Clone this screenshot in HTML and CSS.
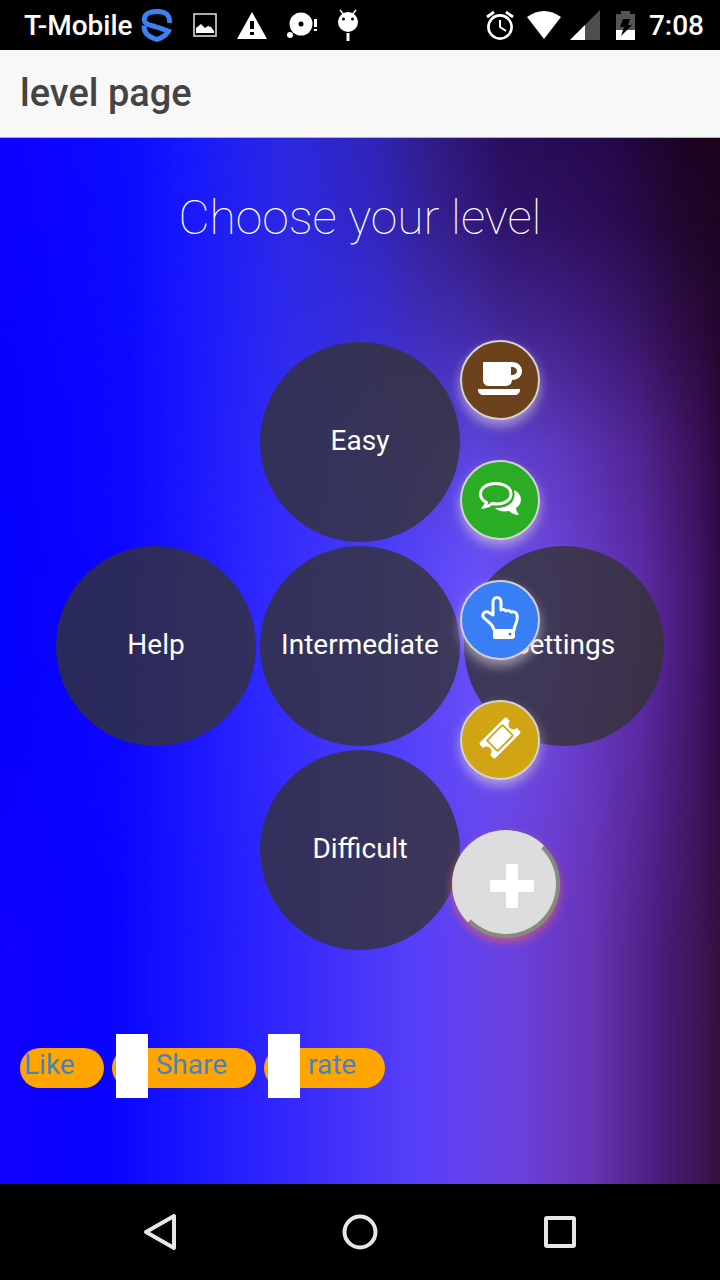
FILE: index.html
```html
<!DOCTYPE html>
<html lang="en">
<head>
<meta charset="utf-8">
<meta name="viewport" content="width=device-width, initial-scale=1">
<title>level page</title>
<link rel="stylesheet" href="styles.css">
</head>
<body>
<div class="status">
  <span class="carrier">T-Mobile</span>
  <div class="notes">
    <svg width="32" height="34" viewBox="0 0 32 34" fill="none" stroke="#3b82f0" stroke-width="5"><path d="M28.500 15C29 7 25 3.500 16 3.500S2.500 7 3.500 13c1 4 6 4 12 6s10 3 12 5"/><path d="M3 17.500C3 25 6 28 16 31.500 23 29 27 26 28.500 21"/></svg>
    <svg width="24" height="24" viewBox="0 0 24 24"><rect x="1" y="1" width="22" height="22" fill="none" stroke="#d8d8d8" stroke-width="1.600"/><path fill="#fff" d="M3 20v-5l5-4 4 4 3-2 3 1 3 4v2z"/></svg>
    <svg width="30" height="27" viewBox="0 0 30 27"><path fill="#fff" d="M15 0l15 27H0z"/><path fill="#000" d="M13 9h4v8h-4zm0 11h4v3h-4z"/></svg>
    <svg width="30" height="26" viewBox="0 0 30 26"><circle cx="14" cy="12" r="11.500" fill="#fff"/><circle cx="14" cy="12" r="2.500"/><circle cx="3" cy="23" r="3" fill="#fff"/><path fill="#fff" d="M27 7h3v8h-3zm0 10h3v2h-3z"/></svg>
    <svg width="22" height="32" viewBox="0 0 22 32"><path d="M3 1l4 5M19 1l-4 5" stroke="#fff" stroke-width="1.500"/><circle cx="11" cy="13" r="10" fill="#fff"/><circle cx="6.500" cy="10" r="1.500"/><circle cx="15.500" cy="10" r="1.500"/><path fill="#fff" d="M9.500 24h3v8h-3z"/></svg>
  </div>
  <div class="system">
    <svg width="28" height="30" viewBox="0 0 28 30" fill="none" stroke="#fff"><circle cx="14" cy="17" r="11.600" stroke-width="2.600"/><path d="M14 10v7l6 4" stroke-width="2"/><path d="M1 7l7-5M27 7l-7-5" stroke-width="2.800"/></svg>
    <svg width="34" height="28" viewBox="0 0 34 28"><path fill="#fff" d="M0 6Q17-6 34 6L17 28z"/></svg>
    <svg class="signal" width="30" height="30" viewBox="0 0 30 30"><path fill="#4e4e4e" d="M30 0v30H0z"/><path fill="#fff" d="M15 15v15H0z"/></svg>
    <svg width="19" height="29" viewBox="0 0 19 29"><path fill="#555" d="M5 0h9v3h5v16H0V3h5z"/><path fill="#fff" d="M0 19h19v10H0z"/><path d="M7 8h7l-2 6h4L5 25l3-9H4z"/></svg>
  </div>
  <time class="clock">7:08</time>
</div>

<header class="bar"><h1>level page</h1></header>

<main class="content">
  <h2 class="heading">Choose your level</h2>
  <div class="board">
    <button class="level easy">Easy</button>
    <button class="level help">Help</button>
    <button class="level">Intermediate</button>
    <button class="level">Settings</button>
    <button class="level hard">Difficult</button>

    <div class="actions">
      <button class="action coffee" aria-label="Coffee">
        <svg width="46" height="36" viewBox="0 0 46 36"><path fill="#fff" fill-rule="evenodd" d="M6 1h29c6 0 10 4 10 9s-4 9-10 9c0 4-3 6-6 6H12c-3 0-6-2-6-6zM34 6v8h1c3 0 5-2 5-4s-2-4-5-4zM1 28h42c0 4-2 6-6 6H7c-4 0-6-2-6-6z"/></svg>
      </button>
      <button class="action chat" aria-label="Chat">
        <svg width="46" height="36" viewBox="0 0 46 36"><path d="M18.500 2.500C10 2.500 3.500 7 3.500 13c0 4 3 7 6 8.500-.500 2-1.500 3-2.500 4.500 3-.500 6-1.500 8-3.500 11 2 19-3 19-9.500S27 2.500 18.500 2.500z" fill="none" stroke="#fff" stroke-width="3"/><path fill="#fff" d="M37 9c4 2 7 5 7 10 0 3-2 6-5 8 0 3 2 5 3 7-4 0-8-2-10-4-6 1-11 0-14-3 12 1 22-6 19-18z"/></svg>
      </button>
      <button class="action hand" aria-label="Point">
        <svg width="40" height="46" viewBox="0 0 40 46"><path d="M14 35c-1-6-6-8-10-12-3-3 0-7 4-6l5 3V7c0-6 8-6 8 0v8c2-1 4 0 5 1 2-1 4 0 5 1 5-1 7 2 6 8-1 5-3 6-3 11" fill="none" stroke="#fff" stroke-width="3" stroke-linejoin="round"/><path fill="#fff" d="M15 34h17q3 0 3 3v4q0 3-3 3H15q-2 0-2-2v-6q0-2 2-2z"/><circle cx="30" cy="39" r="1.500" fill="#387ef5"/></svg>
      </button>
      <button class="action ticket" aria-label="Tickets">
        <svg width="42" height="42" viewBox="0 0 42 42"><g transform="rotate(-45 21 21)"><path fill="#fff" d="M4 10h34q2 0 2 2v4a5 5 0 0 0 0 10v4q0 2-2 2H4q-2 0-2-2v-4a5 5 0 0 0 0-10v-4q0-2 2-2z"/><rect x="10" y="13.500" width="22" height="15" rx="1" fill="none" stroke="#d0a412" stroke-width="1.800"/></g></svg>
      </button>
      <button class="add" aria-label="Open menu">
        <svg width="44" height="44" viewBox="0 0 44 44" fill="#fff"><rect x="16" width="12" height="44" rx="2"/><rect y="16" width="44" height="12" rx="2"/></svg>
      </button>
    </div>
  </div>
  <nav class="links">
    <a class="pill" href="#like"><span>Like</span></a>
    <a class="pill" href="#share"><i class="thumb"></i><span>Share</span></a>
    <a class="pill" href="#rate"><i class="thumb"></i><span>rate</span></a>
  </nav>
</main>

<footer class="keys">
  <button class="key" aria-label="Back"><svg width="40" height="40" viewBox="0 0 40 40"><path d="M34 4v32L6 20z"/></svg></button>
  <button class="key" aria-label="Home"><svg width="40" height="40" viewBox="0 0 40 40"><circle cx="20" cy="20" r="15.500"/></svg></button>
  <button class="key" aria-label="Recent apps"><svg width="40" height="40" viewBox="0 0 40 40"><rect x="6" y="6" width="28" height="28" rx="1"/></svg></button>
</footer>
</body>
</html>
```
FILE: styles.css
```css
* { box-sizing: border-box; }
body {
  margin: 0;
  min-height: 100vh;
  display: flex;
  flex-direction: column;
  font-family: Roboto, "Liberation Sans", sans-serif;
  font-size: 28px;
  background: #000;
}
button { font: inherit; border: 0; padding: 0; cursor: pointer; }
svg { display: block; flex: none; }

.status {
  height: 50px;
  padding: 0 16px 0 24px;
  display: flex;
  align-items: center;
  color: #fff;
  font-weight: 500;
}
.notes { display: flex; align-items: center; gap: 20px; margin-left: 8px; }
.system { display: flex; align-items: center; gap: 13px; margin-left: auto; }
.signal { margin: 0 3px 0 -4px; }
.clock { margin-left: 14px; }

.bar {
  height: 88px;
  padding: 0 20px 2px;
  display: flex;
  align-items: center;
  background: #f8f8f8;
  border-bottom: 1px solid #b2b2b2;
}
.bar h1 { margin: 0; font-size: 38px; font-weight: 500; color: #444; }

.content {
  position: relative;
  isolation: isolate;
  flex: 1;
  display: flex;
  flex-direction: column;
  align-items: center;
  padding: 48px 20px 96px;
  background: linear-gradient(90deg, #0400ff 0%, #0e08ff 18%, #2c27fe 35%, #4a3dfa 52%, #6850f8 66%, #6c46dc 77%, #5c2ca6 89%, #421468 97%, #2d0b48 100%);
}
.content::before,
.content::after {
  content: "";
  position: absolute;
  inset: 0;
  z-index: -1;
}
.content::before {
  background: linear-gradient(90deg, #0d00ff 0%, #0c0cff 18%, #1a1cfa 28%, #2c28e0 40%, #3024b8 52%, #301c88 60%, #290e5c 70%, #26084c 84%, #1c0424 95%, #1c041c 100%);
  mask-image: linear-gradient(#000 0%, rgba(0, 0, 0, 0.9) 8%, rgba(0, 0, 0, 0.62) 18%, rgba(0, 0, 0, 0.2) 30%, transparent 42%);
}
.content::after {
  background: linear-gradient(90deg, #1200ff 0%, #0804ff 15%, #1c18ff 28%, #3a2cfa 43%, #5840f8 58%, #6a42e0 71%, #6834b4 82%, #4a1c78 92%, #361040 100%);
  mask-image: linear-gradient(transparent 50%, #000 78%);
}

.heading { margin: 0; font-size: 48px; line-height: 64px; font-weight: 100; color: #fff; }

.board {
  position: relative;
  margin-top: 92px;
  display: grid;
  grid-template-columns: repeat(3, 200px);
  gap: 4px;
}
.level {
  height: 200px;
  border-radius: 50%;
  color: #fff;
  background: rgba(51, 51, 51, 0.8);
  padding-bottom: 4px;
}
.easy, .hard { grid-column: 2; }
.help { grid-column: 1; }

.actions {
  position: absolute;
  top: -2px;
  left: 396px;
  display: flex;
  flex-direction: column;
  gap: 40px;
}
.action, .add {
  display: flex;
  align-items: center;
  justify-content: center;
  border-radius: 50%;
}
.action {
  width: 80px;
  height: 80px;
  margin-left: 8px;
  border: 2px solid #d5d0d5;
  padding-bottom: 2px;
  box-shadow: 0 6px 12px rgba(215, 205, 215, 0.65);
}
.coffee { background: #6b421c; }
.chat { background: #2aad24; }
.hand { background: #387ef5; padding-bottom: 4px; }
.ticket { background: #d0a412; padding-bottom: 4px; }
.add {
  width: 108px;
  height: 108px;
  margin-top: 10px;
  padding: 4px 0 0 12px;
  background: #ddd;
  border: 4px solid;
  border-color: #ddd #858b80 #858b80 #ddd;
  box-shadow: 0 4px 10px rgba(215, 95, 110, 0.8);
}

.links {
  align-self: stretch;
  display: flex;
  gap: 8px;
  margin-top: 98px;
}
.pill {
  height: 40px;
  padding: 0 29px 4px 4px;
  display: flex;
  align-items: center;
  gap: 8px;
  border-radius: 20px;
  background: #ffa500;
  color: #4a82c0;
  text-decoration: none;
}
.pill span { padding-bottom: 4px; }
.thumb { width: 32px; height: 64px; background: #fff; }

.keys {
  height: 96px;
  padding: 0 60px;
  display: flex;
}
.key {
  flex: 1;
  display: flex;
  align-items: center;
  justify-content: center;
  background: none;
}
.key svg { fill: none; stroke: #e6e6e6; stroke-width: 4; stroke-linejoin: round; }
```
